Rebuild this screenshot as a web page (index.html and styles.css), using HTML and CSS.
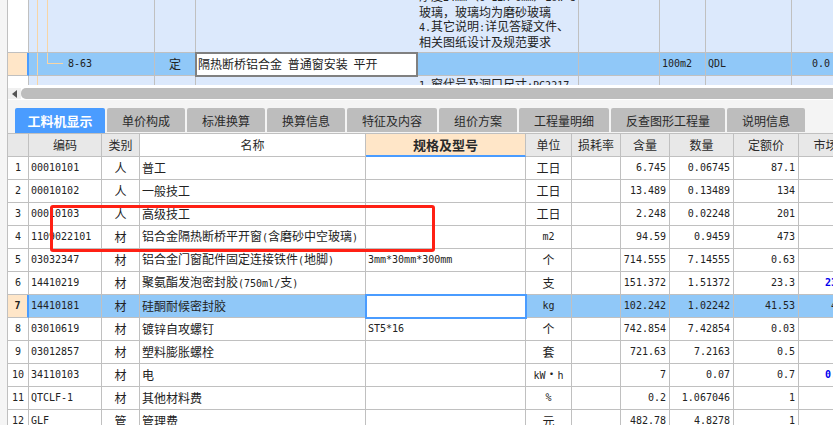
FILE: index.html
```html
<!DOCTYPE html>
<html lang="zh-CN">
<head>
    <meta charset="UTF-8">
    <title>工料机显示</title>
    <link rel="stylesheet" href="styles.css">
</head>
<body>
    <div class="gutter"></div>
    <div class="main">

        <!-- 清单表 -->
        <div class="top-grid">
            <table class="grid top-table">
                <colgroup>
                    <col class="t1"><col class="t2"><col class="t3"><col class="t4"><col class="t5">
                    <col class="t6"><col class="t7"><col class="t8"><col class="t9">
                </colgroup>
                <tr class="row-tall">
                    <td class="head"></td>
                    <td class="tree tree-up"></td>
                    <td></td>
                    <td class="no-line"></td>
                    <td class="desc">
                        <div class="desc-inner">
                            <div>厚度<span class="m">24mm</span>（<span class="m">6+12A+6mm</span>）<span class="m">Low-e</span></div>
                            <div>玻璃，玻璃均为磨砂玻璃</div>
                            <div><span class="m">4.</span>其它说明<span class="m">:</span>详见答疑文件、</div>
                            <div>相关图纸设计及规范要求</div>
                        </div>
                    </td>
                    <td></td><td></td><td></td><td class="last"></td>
                </tr>
                <tr class="row-on">
                    <td class="head"></td>
                    <td class="tree tree-node m">8-63</td>
                    <td class="c">定</td>
                    <td class="edit-gray">隔热断桥铝合金 普通窗安装 平开</td>
                    <td></td>
                    <td></td>
                    <td class="m pad">100m2</td>
                    <td class="m pad">QDL</td>
                    <td class="last m r">0.0</td>
                </tr>
                <tr class="row-next">
                    <td class="head"></td>
                    <td class="tree tree-line"></td>
                    <td></td>
                    <td class="no-line"></td>
                    <td class="desc"><span class="m">1.</span>窗代号及洞口尺寸<span class="m">:PC2217</span></td>
                    <td></td><td></td><td></td><td class="last"></td>
                </tr>
            </table>
        </div>

        <div class="scroll">
            <div class="arrow"></div>
            <div class="thumb"></div>
        </div>

        <div class="tabs">
            <div class="tab on">工料机显示</div>
            <div class="tab w78">单价构成</div>
            <div class="tab w78">标准换算</div>
            <div class="tab w78">换算信息</div>
            <div class="tab w90">特征及内容</div>
            <div class="tab w78">组价方案</div>
            <div class="tab w90">工程量明细</div>
            <div class="tab w114">反查图形工程量</div>
            <div class="tab w78">说明信息</div>
        </div>

        <!-- 工料机表 -->
        <div class="detail">
            <table class="grid detail-table">
                <colgroup>
                    <col class="d1"><col class="d2"><col class="d3"><col class="d4"><col class="d5"><col class="d6">
                    <col class="d7"><col class="d8"><col class="d9"><col class="d10"><col class="d11">
                </colgroup>
                <tr class="row-title">
                    <td></td>
                    <td>编码</td>
                    <td>类别</td>
                    <td class="title-white">名称</td>
                    <td class="title-spec">规格及型号</td>
                    <td>单位</td>
                    <td>损耗率</td>
                    <td>含量</td>
                    <td>数量</td>
                    <td>定额价</td>
                    <td>市场价</td>
                </tr>
                <tr>
                    <td class="head m c">1</td><td class="m code">00010101</td><td class="c">人</td><td class="name">普工</td><td></td>
                    <td class="c">工日</td><td></td><td class="m r">6.745</td><td class="m r">0.06745</td><td class="m r">87.1</td><td class="m r">87.1</td>
                </tr>
                <tr>
                    <td class="head m c">2</td><td class="m code">00010102</td><td class="c">人</td><td class="name">一般技工</td><td></td>
                    <td class="c">工日</td><td></td><td class="m r">13.489</td><td class="m r">0.13489</td><td class="m r">134</td><td class="m r">134</td>
                </tr>
                <tr>
                    <td class="head m c">3</td><td class="m code">00010103</td><td class="c">人</td><td class="name">高级技工</td><td></td>
                    <td class="c">工日</td><td></td><td class="m r">2.248</td><td class="m r">0.02248</td><td class="m r">201</td><td class="m r">201</td>
                </tr>
                <tr>
                    <td class="head m c">4</td><td class="m code">1109022101</td><td class="c">材</td><td class="name">铝合金隔热断桥平开窗<span class="m">(</span>含磨砂中空玻璃<span class="m">)</span></td><td></td>
                    <td class="m c">m2</td><td></td><td class="m r">94.59</td><td class="m r">0.9459</td><td class="m r">473</td><td class="m r">473</td>
                </tr>
                <tr>
                    <td class="head m c">5</td><td class="m code">03032347</td><td class="c">材</td><td class="name">铝合金门窗配件固定连接铁件<span class="m">(</span>地脚<span class="m">)</span></td><td class="m code">3mm*30mm*300mm</td>
                    <td class="c">个</td><td></td><td class="m r">714.555</td><td class="m r">7.14555</td><td class="m r">0.63</td><td class="m r">0.63</td>
                </tr>
                <tr>
                    <td class="head m c">6</td><td class="m code">14410219</td><td class="c">材</td><td class="name">聚氨酯发泡密封胶<span class="m">(750ml/</span>支<span class="m">)</span></td><td></td>
                    <td class="c">支</td><td></td><td class="m r">151.372</td><td class="m r">1.51372</td><td class="m r">23.3</td><td class="m r blue">23.300</td>
                </tr>
                <tr class="row-on">
                    <td class="head m c bold">7</td><td class="m code">14410181</td><td class="c">材</td><td class="name">硅酮耐候密封胶</td><td class="edit-blue"></td>
                    <td class="m c">kg</td><td></td><td class="m r">102.242</td><td class="m r">1.02242</td><td class="m r">41.53</td><td class="m r">41.53</td>
                </tr>
                <tr>
                    <td class="head m c">8</td><td class="m code">03010619</td><td class="c">材</td><td class="name">镀锌自攻螺钉</td><td class="m code">ST5*16</td>
                    <td class="c">个</td><td></td><td class="m r">742.854</td><td class="m r">7.42854</td><td class="m r">0.03</td><td class="m r">0.03</td>
                </tr>
                <tr>
                    <td class="head m c">9</td><td class="m code">03012857</td><td class="c">材</td><td class="name">塑料膨胀螺栓</td><td></td>
                    <td class="c">套</td><td></td><td class="m r">721.63</td><td class="m r">7.2163</td><td class="m r">0.5</td><td class="m r">0.5</td>
                </tr>
                <tr>
                    <td class="head m c">10</td><td class="m code">34110103</td><td class="c">材</td><td class="name">电</td><td></td>
                    <td class="c"><span class="m">kW</span>・<span class="m">h</span></td><td></td><td class="m r">7</td><td class="m r">0.07</td><td class="m r">0.7</td><td class="m r blue">0.7000</td>
                </tr>
                <tr>
                    <td class="head m c">11</td><td class="m code">QTCLF-1</td><td class="c">材</td><td class="name">其他材料费</td><td></td>
                    <td class="m c">%</td><td></td><td class="m r">0.2</td><td class="m r">1.067046</td><td class="m r">1</td><td class="m r">1</td>
                </tr>
                <tr>
                    <td class="head m c">12</td><td class="m code">GLF</td><td class="c">管</td><td class="name">管理费</td><td></td>
                    <td class="c">元</td><td></td><td class="m r">482.78</td><td class="m r">4.8278</td><td class="m r">1</td><td class="m r">1</td>
                </tr>
            </table>
            <div class="red-box"></div>
        </div>
    </div>
</body>
</html>
```

FILE: styles.css
```css
html,body{ margin: 0; padding: 0; height: 100%; }

body{
    display: flex;
    height: 425px;
    overflow: hidden;
    background: #fff;
    color: #222;
    font: 12px/14px "Noto Sans CJK SC", "Liberation Sans", sans-serif;
}

.gutter{
    width: 7px;
    flex: none;
    background: #f5f5f5;
    border-right: 1px solid #c0c0c0;
}

.main{
    width: 825px;
    flex: none;
    overflow: hidden;
}

/* 表格公共 */
.grid{
    border-collapse: separate;
    border-spacing: 0;
    table-layout: fixed;
}

.grid td{
    box-sizing: border-box;
    height: 23px;
    padding: 0;
    border-right: 1px solid #c0c0c0;
    border-bottom: 1px solid #c0c0c0;
    white-space: nowrap;
    overflow: hidden;
    vertical-align: middle;
}

.m{ font-family: "DejaVu Sans Mono", "Liberation Mono", monospace; font-size: 10px; }
.c{ text-align: center; }
.r{ text-align: right; padding-right: 3px !important; }
.pad{ padding-left: 2px !important; }
.bold{ font-weight: bold; }
.blue{ color: #0000ee; font-weight: bold; }

.head{ background: #fff; }

.row-on td{ background-color: #90c8f8; }
.row-on .head{
    background: #ffe6c8;
    border-right: 2px solid #4a9cff;
}

/* 上面的清单表 */
.top-grid{
    height: 85px;
    overflow: hidden;
}

.top-table{ width: 825px; }
.top-table td{ background-color: #dce9fc; }
.top-table .head{ background-color: #fff; }
.top-table .row-on td{ background-color: #90c8f8; }
.top-table .row-on .head{ background: #ffe6c8; }

.t1{ width: 21px; }
.t2{ width: 126px; }
.t3{ width: 41px; }
.t4{ width: 221px; }
.t5{ width: 162px; }
.t6{ width: 81px; }
.t7{ width: 46px; }
.t8{ width: 86px; }
.t9{ width: 41px; }

.top-table .row-tall td{ height: 53px; }
.top-table .last{ border-right: none; }
.no-line{ border-right: none !important; }

.desc{ padding-left: 2px !important; }
.desc-inner{
    height: 49px;
    padding-bottom: 3px;
    display: flex;
    flex-direction: column;
    justify-content: flex-end;
    overflow: hidden;
}

.row-next .desc{ vertical-align: top; padding-top: 1px; }

.tree{ background-repeat: no-repeat; }
.tree-up,
.tree-line{
    background-image: linear-gradient(#f8d5a4, #f8d5a4), linear-gradient(#f8d5a4, #f8d5a4);
    background-size: 1px 100%, 1px 100%;
    background-position: 8px 0, 18px 0;
}
.tree-line{
    background-image: linear-gradient(#f8d5a4, #f8d5a4);
    background-size: 1px 100%;
    background-position: 8px 0;
}
.tree-node{
    padding-left: 39px !important;
    background-image: linear-gradient(#f8d5a4, #f8d5a4), linear-gradient(#f8d5a4, #f8d5a4), linear-gradient(#f8d5a4, #f8d5a4);
    background-size: 1px 100%, 1px 11px, 16px 1px;
    background-position: 8px 0, 18px 0, 18px 10px;
}

.edit-gray{
    background-color: #fff !important;
    outline: 2px solid #808080;
    outline-offset: -1px;
    padding-left: 2px !important;
    word-spacing: 3px;
}

/* 滚动条 */
.scroll{
    display: flex;
    align-items: center;
    height: 11px;
    padding: 3px 0 1px;
    background: #fff;
}

.arrow{
    width: 13px;
    height: 11px;
    flex: none;
    background: #f0f0f0;
    display: flex;
    align-items: center;
    justify-content: flex-end;
    box-sizing: border-box;
    padding-right: 4px;
}
.arrow::after{
    content: '';
    border-top: 4px solid transparent;
    border-bottom: 4px solid transparent;
    border-right: 5px solid #555;
}

.thumb{
    flex: 1;
    height: 11px;
    background: #bdbdbd;
    border-radius: 5px 0 0 5px;
}

/* 页签 */
.tabs{
    display: flex;
    align-items: flex-start;
    gap: 2px;
    height: 25px;
    padding: 8px 0 0 7px;
    background: #f4f4f4;
}

.tab{
    height: 24px;
    line-height: 25px;
    text-align: center;
    background: #bdbdbd;
    color: #2a2a2a;
    border-radius: 2px 2px 0 0;
    flex: none;
}

.tab.on{
    width: 90px;
    height: 25px;
    background: #4a9cff;
    color: #fff;
    font-size: 13px;
    font-weight: bold;
}

.w78{ width: 78px; }
.w90{ width: 90px; }
.w114{ width: 114px; }

/* 工料机表 */
.detail{
    position: relative;
    height: 292px;
    overflow: hidden;
}

.detail-table{ width: 857px; }

.d1{ width: 21px; }
.d2{ width: 73px; }
.d3{ width: 38px; }
.d4{ width: 226px; }
.d5{ width: 160px; }
.d6{ width: 46px; }
.d7{ width: 49px; }
.d8{ width: 49px; }
.d9{ width: 64px; }
.d10{ width: 65px; }
.d11{ width: 66px; }

.grid .row-title td{
    height: 24px;
    border-top: 1px solid #c0c0c0;
    background: #e8e8e8;
    text-align: center;
    color: #2a2a2a;
}

.grid .row-title .title-white{ background: #fff; }
.grid .row-title .title-spec{
    background: #ffe6c8;
    border-bottom: 2px solid #4a9cff;
    font-size: 13px;
    font-weight: bold;
}

.code{ padding-left: 2px !important; }
.name{ padding-left: 2px !important; }

.edit-blue{
    background-color: #fff !important;
    outline: 2px solid #4a9cff;
    outline-offset: -1px;
}

.red-box{
    position: absolute;
    left: 42px;
    top: 72px;
    width: 385px;
    height: 47px;
    box-sizing: border-box;
    border: 3px solid #ff2014;
    border-radius: 3px;
}
```
